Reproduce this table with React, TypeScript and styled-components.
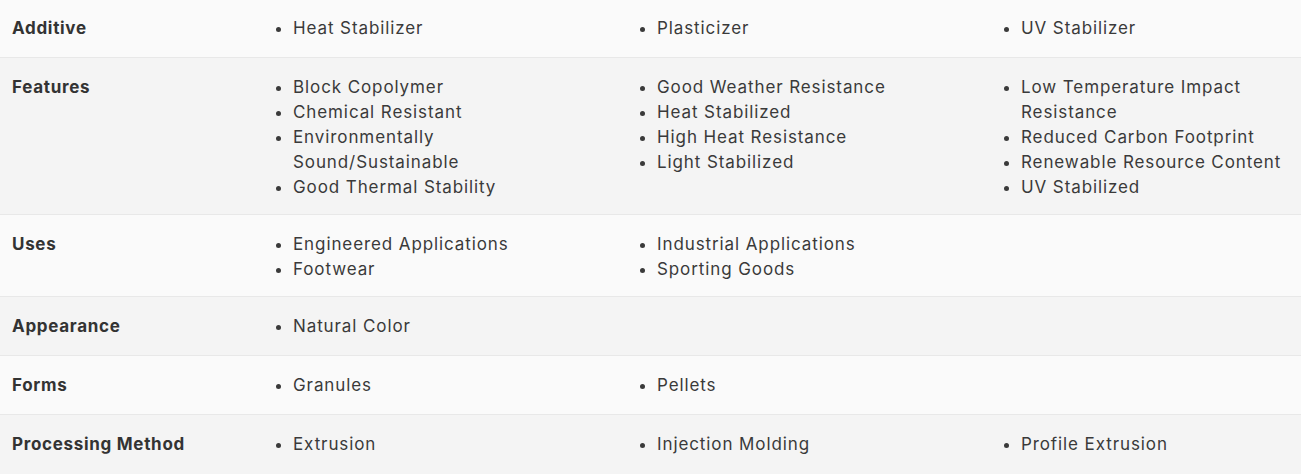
import styled, { createGlobalStyle } from "styled-components";

const GlobalStyle = createGlobalStyle`
  body {
    margin: 0;
    background: #f4f4f4;
    font-family: Inter, "Noto Sans", "Liberation Sans", sans-serif;
    color: #3a3a3a;
  }
`;

const rows: { label: string; columns: string[][] }[] = [
  { label: "Additive", columns: [["Heat Stabilizer"], ["Plasticizer"], ["UV Stabilizer"]] },
  {
    label: "Features",
    columns: [
      ["Block Copolymer", "Chemical Resistant", "Environmentally Sound/Sustainable", "Good Thermal Stability"],
      ["Good Weather Resistance", "Heat Stabilized", "High Heat Resistance", "Light Stabilized"],
      ["Low Temperature Impact Resistance", "Reduced Carbon Footprint", "Renewable Resource Content", "UV Stabilized"],
    ],
  },
  {
    label: "Uses",
    columns: [
      ["Engineered Applications", "Footwear"],
      ["Industrial Applications", "Sporting Goods"],
    ],
  },
  { label: "Appearance", columns: [["Natural Color"]] },
  { label: "Forms", columns: [["Granules"], ["Pellets"]] },
  { label: "Processing Method", columns: [["Extrusion"], ["Injection Molding"], ["Profile Extrusion"]] },
];

const App = () => {
  return (
    <>
      <GlobalStyle />
      <Table>
        {rows.map((row, i) => (
          <Row key={row.label} $odd={i % 2 === 1}>
            <Label>{row.label}</Label>
            <Values>
              {row.columns.map((col, j) => (
                <List key={j}>
                  {col.map((item) => (
                    <Item key={item}>{item}</Item>
                  ))}
                </List>
              ))}
            </Values>
          </Row>
        ))}
      </Table>
    </>
  );
};

export default App;

const Table = styled.div`
  width: 1301px;
  margin-top: -1px;
`;

const Row = styled.div<{ $odd: boolean }>`
  display: grid;
  grid-template-columns: 264px 1fr;
  padding: 16px 0 14px;
  background: ${(p) => (p.$odd ? "#f4f4f4" : "#fafafa")};
  border-bottom: 1px solid #e8e8e8;

  &:last-child {
    border-bottom: none;
  }
`;

const Label = styled.div`
  padding: 0 0 2px 12px;
  font-size: 17px;
  line-height: 26px;
  font-weight: 700;
  letter-spacing: 0.7px;
  color: #333;
`;

const Values = styled.div`
  display: grid;
  grid-template-columns: 328px 328px 1fr;
  column-gap: 36px;
  padding-top: 1px;
`;

const List = styled.ul`
  margin: 0;
  padding: 0 0 0 29px;
`;

const Item = styled.li`
  font-size: 17px;
  line-height: 25px;
  letter-spacing: 0.9px;
  color: #3a3a3a;
`;
